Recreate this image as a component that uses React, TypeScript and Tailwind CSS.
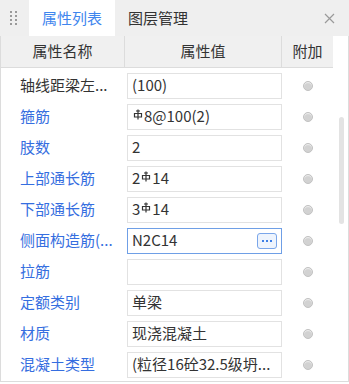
import React from "react";

type Row = { name: string; value: React.ReactNode; blue: boolean; focused?: boolean };

// HRB steel bar grade symbol (not in system fonts)
function Bar() {
  return (
    <svg width="10" height="13" viewBox="0 0 10 13" className="inline-block mx-[1px] -mt-[5px] align-middle">
      <path d="M5 0.5 V10.5 M3 2 H7 M1.5 4.5 H8.5 V8 H1.5 Z" stroke="#333" strokeWidth="1.2" fill="none" />
    </svg>
  );
}

const rows: Row[] = [
  { name: "轴线距梁左...", value: "(100)", blue: false },
  { name: "箍筋", value: <><Bar />8@100(2)</>, blue: true },
  { name: "肢数", value: "2", blue: true },
  { name: "上部通长筋", value: <>2<Bar />14</>, blue: true },
  { name: "下部通长筋", value: <>3<Bar />14</>, blue: true },
  { name: "侧面构造筋(...", value: "N2C14", blue: true, focused: true },
  { name: "拉筋", value: "", blue: true },
  { name: "定额类别", value: "单梁", blue: true },
  { name: "材质", value: "现浇混凝土", blue: true },
  { name: "混凝土类型", value: "(粒径16砼32.5级坍...", blue: true },
];

function Grip() {
  return (
    <svg width="9" height="14" viewBox="0 0 9 14" className="text-[#9a9a9a]">
      {[0, 1].map((c) =>
        [0, 1, 2, 3].map((r) => (
          <rect key={`${c}-${r}`} x={c * 5} y={r * 4} width="2" height="2" fill="currentColor" />
        ))
      )}
    </svg>
  );
}

function Radio() {
  return (
    <span className="block w-[10px] h-[10px] rounded-full bg-[#d2d2d2] border border-[#c2c2c2] shadow-[inset_0_1px_1px_rgba(255,255,255,0.7)]" />
  );
}

export default function App() {
  return (
    <div
      className="w-[349px] h-[384px] bg-white overflow-hidden text-[#333] flex flex-col"
      style={{ fontFamily: '"Noto Sans CJK SC", "Noto Sans", sans-serif' }}
    >
      {/* Tabs */}
      <div className="h-[36px] bg-[#efefef] flex items-stretch shrink-0">
        <div className="w-[29px] flex items-center justify-center">
          <Grip />
        </div>
        <div className="w-[86px] bg-white flex items-center justify-center text-[15px] text-[#3f86ee]">
          属性列表
        </div>
        <div className="w-[86px] flex items-center justify-center text-[15px] text-[#333]">
          图层管理
        </div>
        <div className="flex-1" />
        <div className="w-[40px] flex items-center justify-center">
          <svg width="11" height="11" viewBox="0 0 11 11">
            <path d="M1 1 L10 10 M10 1 L1 10" stroke="#9a9a9a" strokeWidth="1.2" />
          </svg>
        </div>
      </div>

      {/* Grid */}
      <div className="flex-1 flex border-l border-r border-b border-[#dcdcdc] mb-[2px] min-h-0">
        <div className="w-[332px] flex flex-col">
          <div className="h-[32px] flex bg-[#f0f0f0] border-b border-[#dcdcdc] text-[15px] text-[#333]">
            <div className="w-[124px] flex items-center justify-center border-r border-[#dcdcdc]">属性名称</div>
            <div className="w-[157px] flex items-center justify-center border-r border-[#dcdcdc]">属性值</div>
            <div className="flex-1 flex items-center justify-center">附加</div>
          </div>
          <div className="flex flex-col pt-[2px]">
            {rows.map((r) => (
              <div key={r.name} className="h-[31px] flex items-center">
                <div
                  className={`w-[126px] pl-[19px] text-[15px] whitespace-nowrap ${r.blue ? "text-[#356ee0]" : "text-[#333]"}`}
                >
                  {r.name}
                </div>
                <div
                  className={`w-[155px] h-[26px] flex items-center pl-[4px] pr-[4px] text-[15px] text-[#333] whitespace-nowrap border ${r.focused ? "border-[#6f9fe6]" : "border-[#e2e2e2]"}`}
                >
                  <span className="flex-1 overflow-hidden">{r.value}</span>
                  {r.focused && (
                    <span className="w-[20px] h-[16px] rounded-[3px] border border-[#7aa6ea] bg-[#eef4fd] flex items-center justify-center gap-[2px]">
                      <span className="w-[2px] h-[2px] bg-[#3d7fe6]" />
                      <span className="w-[2px] h-[2px] bg-[#3d7fe6]" />
                      <span className="w-[2px] h-[2px] bg-[#3d7fe6]" />
                    </span>
                  )}
                </div>
                <div className="flex-1 flex items-center justify-center">
                  <Radio />
                </div>
              </div>
            ))}
          </div>
        </div>
        <div className="flex-1 flex justify-center pt-[81px] pl-[1px]">
          <div className="w-[5px] h-[107px] bg-[#e3e3e3] rounded-full" />
        </div>
      </div>
    </div>
  );
}
